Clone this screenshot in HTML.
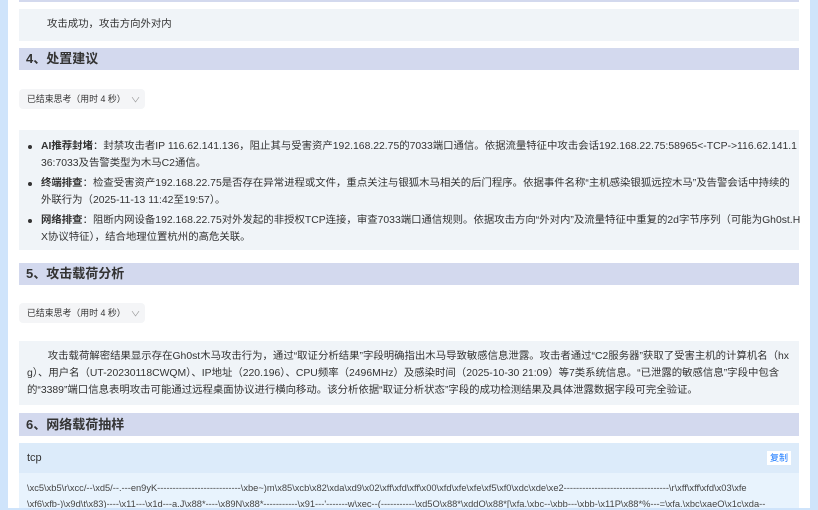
<!DOCTYPE html>
<html><head><meta charset="utf-8"><style>
*{margin:0;padding:0;box-sizing:border-box}
body{width:818px;height:510px;overflow:hidden;background:#cfe4fb;font-family:"Liberation Sans","Noto Sans CJK SC",sans-serif;font-size:10.4px;color:#333;position:relative}
.panel{position:absolute;left:8px;top:0;width:802px;height:508px;background:#fff}
.abs{position:absolute;left:19px;width:780px}
.box{background:#f0f4f8}
.hd{background:#d3d9ee;font-weight:bold;font-size:13px;color:#333;padding-left:7px;line-height:22px}
.btn{position:absolute;left:19px;width:126px;height:20px;background:#f4f5f7;border-radius:4px;font-size:8.9px;line-height:20px;padding-left:8px;color:#333;white-space:nowrap}
.btn span{color:#999;margin-left:6px;font-size:7px;display:inline-block;transform:scaleX(1.4)}
.nw{white-space:nowrap}
ul{list-style:none}
li{position:relative;padding-left:22px;line-height:17px;margin-bottom:3px;white-space:nowrap}
li:before{content:"";position:absolute;left:9px;top:7px;width:4px;height:4px;border-radius:50%;background:#333}
</style></head><body>
<div class="panel"></div>
<div class="abs" style="top:0;height:2px;background:#d3d9ee"></div>
<div class="abs box" style="top:9px;height:32px;padding-left:28px;line-height:32px">攻击成功，攻击方向外对内</div>
<div class="abs hd" style="top:48px;height:22px">4、处置建议</div>
<div class="btn" style="top:89px">已结束思考（用时 4 秒）<span>∨</span></div>
<div class="abs box" style="top:130px;height:120px;padding-top:8px">
<ul>
<li><b>AI推荐封堵</b>：封禁攻击者IP 116.62.141.136，阻止其与受害资产192.168.22.75的7033端口通信。依据流量特征中攻击会话192.168.22.75:58965&lt;-TCP-&gt;116.62.141.1<br>36:7033及告警类型为木马C2通信。</li>
<li><b>终端排查</b>：检查受害资产192.168.22.75是否存在异常进程或文件，重点关注与银狐木马相关的后门程序。依据事件名称“主机感染银狐远控木马”及告警会话中持续的<br>外联行为（2025-11-13 11:42至19:57）。</li>
<li><b>网络排查</b>：阻断内网设备192.168.22.75对外发起的非授权TCP连接，审查7033端口通信规则。依据攻击方向“外对内”及流量特征中重复的2d字节序列（可能为Gh0st.H<br>X协议特征），结合地理位置杭州的高危关联。</li>
</ul></div>
<div class="abs hd" style="top:263px;height:22px">5、攻击载荷分析</div>
<div class="btn" style="top:303px">已结束思考（用时 4 秒）<span>∨</span></div>
<div class="abs box nw" style="top:341px;height:64px;padding:7px 0 0 8px;line-height:17px">&emsp;&emsp;攻击载荷解密结果显示存在Gh0st木马攻击行为，通过“取证分析结果”字段明确指出木马导致敏感信息泄露。攻击者通过“C2服务器”获取了受害主机的计算机名（hx<br>g）、用户名（UT-20230118CWQM）、IP地址（220.196）、CPU频率（2496MHz）及感染时间（2025-10-30 21:09）等7类系统信息。“已泄露的敏感信息”字段中包含<br>的“3389”端口信息表明攻击可能通过远程桌面协议进行横向移动。该分析依据“取证分析状态”字段的成功检测结果及具体泄露数据字段可完全验证。</div>
<div class="abs hd" style="top:413px;height:23px;line-height:23px">6、网络载荷抽样</div>
<div class="abs" style="top:443px;height:30px;background:#dcebfa;line-height:30px;padding-left:8px;font-size:11px">tcp<span style="position:absolute;right:8px;top:8px;height:14px;line-height:14px;background:#fff;color:#1677ff;font-size:9px;padding:0 3px">复制</span></div>
<div class="abs nw" style="top:473px;height:35px;background:#e8f3fd;padding:7px 0 0 8px;font-size:9.3px;line-height:16px;overflow:hidden;color:#444">\xc5\xb5\r\xcc/--\xd5/--.---en9yK---------------------------\xbe~)m\x85\xcb\x82\xda\xd9\x02\xff\xfd\xff\x00\xfd\xfe\xfe\xf5\xf0\xdc\xde\xe2----------------------------------\r\xff\xff\xfd\x03\xfe<br>\xf6\xfb-)\x9d\t\x83)----\x11---\x1d---a.J\x88*----\x89N\x88*-----------\x91---'-------w\xec--(-----------\xd5O\x88*\xddO\x88*[\xfa.\xbc--\xbb---\xbb-\x11P\x88*%---=\xfa.\xbc\xaeO\x1c\xda--</div>
</body></html>
